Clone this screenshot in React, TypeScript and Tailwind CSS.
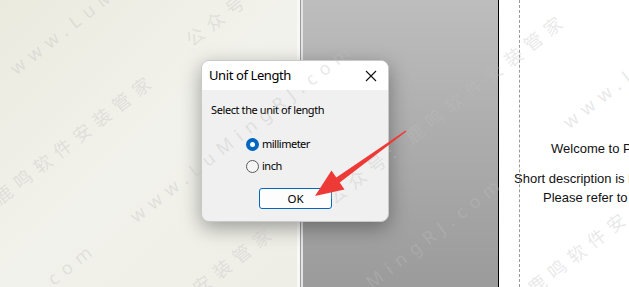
const marks = [
  { text: "www.LuMingRJ.com", left: 12, top: 60 },
  { text: "鹿鸣软件安装管家", left: -4, top: 190 },
  { text: "公众号", left: 188, top: 32 },
  { text: "www.LuMingRJ.com", left: 132, top: 208 },
  { text: "公众号: 鹿鸣软件安装管家", left: 330, top: 190 },
  { text: ".com", left: 40, top: 278 },
  { text: "安装管家", left: 195, top: 280 },
  { text: "MingRJ.com", left: 368, top: 274 },
  { text: "鹿鸣软件安", left: 530, top: 280 },
  { text: "www.L", left: 565, top: 114 },
];

function Radio({ checked, label }: { checked?: boolean; label: string }) {
  return (
    <div className="flex items-center gap-[3px] h-[22px]">
      {checked ? (
        <span className="w-[13px] h-[13px] rounded-full bg-[#0067c0] flex items-center justify-center">
          <span className="w-[5px] h-[5px] rounded-full bg-white" />
        </span>
      ) : (
        <span className="w-[13px] h-[13px] rounded-full border border-[#5a5a5a] bg-[#f6f6f6]" />
      )}
      <span>{label}</span>
    </div>
  );
}

export default function App() {
  return (
    <div className="relative w-[629px] h-[287px] overflow-hidden flex">
      {/* left document area */}
      <div className="w-[297px] h-full bg-gradient-to-br from-[#ebeadf] via-[#f2f2ec] to-[#eeeee6]" />
      <div className="w-[3px] h-full bg-[#f8f8f6]" />
      <div className="w-[1px] h-full bg-[#9c9c9c]" />
      <div className="w-[2px] h-full bg-[#e4e4e4]" />
      {/* grey gap */}
      <div className="flex-1 h-full bg-gradient-to-b from-[#bdbdbd] to-[#9b9b9b]" />
      <div className="w-[1px] h-full bg-black" />
      {/* white page */}
      <div
        className="w-[130px] h-full bg-white relative overflow-hidden text-[13px] text-[#111] whitespace-nowrap"
        style={{ fontFamily: '"Liberation Sans", Arial, sans-serif' }}
      >
        <div className="absolute left-[20px] top-0 h-full border-l border-dashed border-[#9a9a9a]" />
        <div className="flex flex-col pt-[141px]">
          <div className="ml-[52px] leading-[15px]">Welcome to Program</div>
          <div className="ml-[15px] mt-[15px] leading-[15px]">Short description is here</div>
          <div className="ml-[44px] mt-[4px] leading-[15px]">Please refer to help</div>
        </div>
      </div>

      {/* dialog */}
      <div
        className="absolute left-[201px] top-[60px] w-[188px] h-[162px] rounded-[8px] border border-[#c9c9c9] bg-[#f0f0f0] shadow-[0_6px_20px_rgba(0,0,0,0.35)] overflow-hidden text-[#000]"
        style={{ fontFamily: '"Noto Sans", "Open Sans", sans-serif' }}
      >
        <div className="h-[29px] bg-white flex items-center justify-between pl-[7px] pr-[10px]">
          <span className="text-[13px] tracking-[-0.4px]">Unit of Length</span>
          <svg width="12" height="12" viewBox="0 0 12 12" className="mr-[1px]">
            <path d="M1 1 L11 11 M11 1 L1 11" stroke="#111" strokeWidth="1.1" />
          </svg>
        </div>
        <div className="pl-[9px] pt-[12px] text-[11px] tracking-[-0.4px] leading-[16px]">
          Select the unit of length
        </div>
        <div className="flex flex-col pl-[44px] pt-[15px] text-[11px] tracking-[-0.5px]">
          <Radio checked label="millimeter" />
          <Radio label="inch" />
        </div>
        <div className="flex pl-[57px] pt-[11px]">
          <button className="w-[73px] h-[21px] rounded-[3px] border border-[#0067c0] bg-[#fdfdfd] text-[11.5px] flex items-center justify-center">
            OK
          </button>
        </div>
      </div>

      {/* watermark */}
      {marks.map((m, i) => (
        <div
          key={i}
          className="absolute pointer-events-none whitespace-nowrap text-[18px] leading-[20px] tracking-[7px] text-[rgba(190,190,190,0.35)] origin-left -rotate-[38deg]"
          style={{ left: m.left, top: m.top, fontFamily: '"Noto Sans", "Noto Sans CJK SC", sans-serif' }}
        >
          {m.text}
        </div>
      ))}

      {/* red arrow */}
      <svg className="absolute left-0 top-0 pointer-events-none" width="629" height="287" viewBox="0 0 629 287">
        <polygon
          points="315,196 331.5,170.5 336.3,177.5 405.6,130.4 406.4,131.6 339.7,182.5 344.5,189.5"
          fill="#ee3a36"
        />
      </svg>
    </div>
  );
}
